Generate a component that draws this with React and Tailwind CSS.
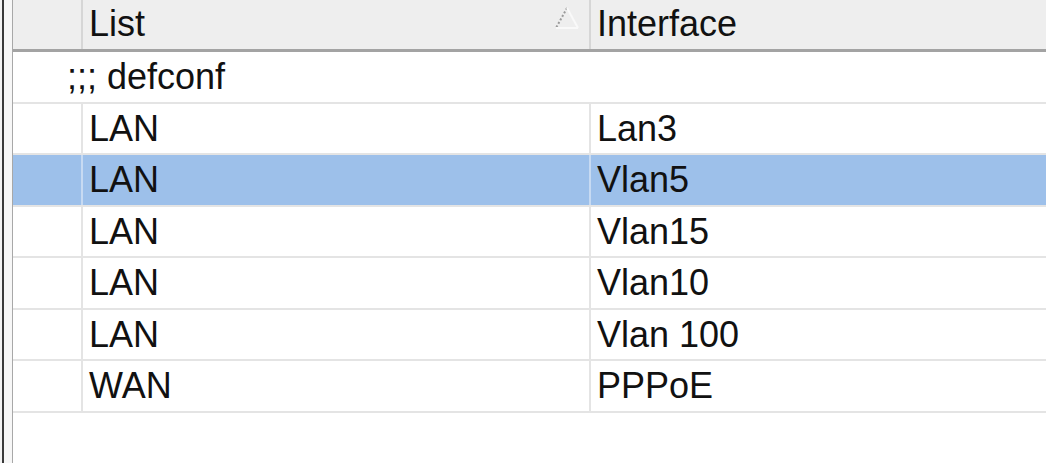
import React from "react";

const rows = [
  { list: "LAN", iface: "Lan3" },
  { list: "LAN", iface: "Vlan5", selected: true },
  { list: "LAN", iface: "Vlan15" },
  { list: "LAN", iface: "Vlan10" },
  { list: "LAN", iface: "Vlan 100" },
  { list: "WAN", iface: "PPPoE" },
];

const SortArrow = () => (
  <svg width="26" height="23" viewBox="0 0 26 23" className="shrink-0">
    <line x1="13" y1="1" x2="2" y2="21" stroke="#9a9a9a" strokeWidth="2" strokeDasharray="2 2" />
    <line x1="13" y1="1" x2="24" y2="21" stroke="#f9f9f9" strokeWidth="2" />
    <line x1="2" y1="21" x2="24" y2="21" stroke="#f9f9f9" strokeWidth="2" />
  </svg>
);

const Row = ({ list, iface, selected, tall }) => (
  <div
    className={
      "flex border-b-2 border-[#e4e4e4] " +
      (tall ? "h-[52px] " : "h-[51px] ") +
      (selected ? "bg-[#9dc0ea]" : "bg-white")
    }
  >
    <div
      className={
        "w-[70px] shrink-0 border-r-2 " +
        (selected ? "border-[#c7daf2]" : "border-[#e4e4e4]")
      }
    />
    <div
      className={
        "w-[508px] shrink-0 flex items-center pl-[6px] border-r-2 " +
        (selected ? "border-[#c7daf2]" : "border-[#e4e4e4]")
      }
    >
      {list}
    </div>
    <div className="flex-1 flex items-center pl-[6px]">{iface}</div>
  </div>
);

export default function App() {
  return (
    <div
      className="w-[1046px] h-[463px] bg-white flex overflow-hidden text-[#111] text-[36px] leading-none"
      style={{ fontFamily: '"Liberation Sans", Arial, sans-serif' }}
    >
      {/* window frame on the left */}
      <div className="w-[2px] shrink-0 bg-[#f3f3f3]" />
      <div className="w-[2px] shrink-0 bg-[#3a3a3a]" />
      <div className="w-[8px] shrink-0 bg-[#f7f7f7]" />
      <div className="w-[1px] shrink-0 bg-[#a8a8a8]" />

      <div className="flex-1 flex flex-col">
        {/* header */}
        <div className="flex h-[52px] bg-[#eeeeee] border-b-[3px] border-[#a3a3a3]">
          <div className="w-[70px] shrink-0 border-r-2 border-[#d6d6d6]" />
          <div className="w-[508px] shrink-0 flex items-center justify-between pl-[6px] pr-[9px] pb-[2px] border-r-2 border-[#d6d6d6]">
            <span>List</span>
            <div className="-mt-[10px]">
              <SortArrow />
            </div>
          </div>
          <div className="flex-1 flex items-center pl-[6px] pb-[2px]">Interface</div>
        </div>

        {/* comment row */}
        <div className="flex items-center h-[52px] border-b-2 border-[#e4e4e4] pl-[54px]">
          ;;; defconf
        </div>

        {rows.map((r, i) => (
          <Row key={i} tall={i % 2 === 1} {...r} />
        ))}
      </div>
    </div>
  );
}
